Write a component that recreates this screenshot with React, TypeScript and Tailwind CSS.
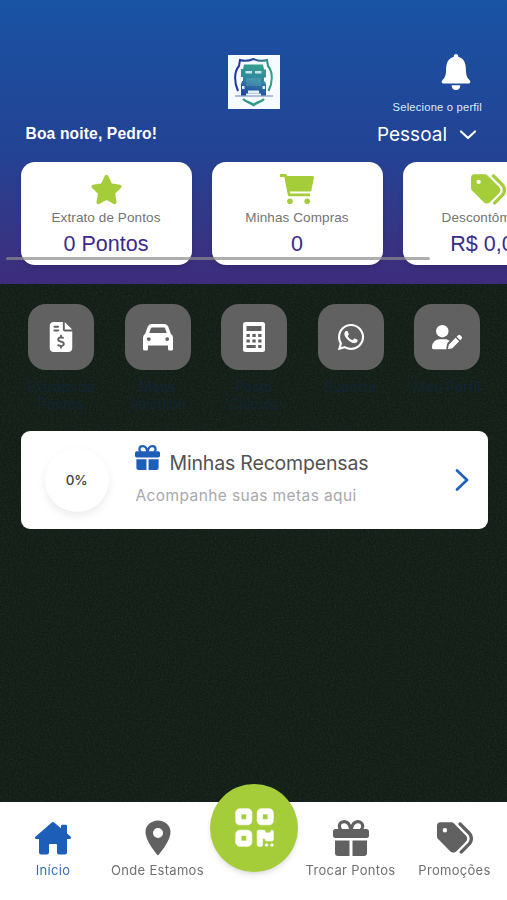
import type { ReactNode } from "react";
import { IoIosNotifications } from "react-icons/io";
import { IoLocationSharp } from "react-icons/io5";
import { FaFileInvoiceDollar, FaQrcode, FaStar, FaTags, FaWhatsapp } from "react-icons/fa6";

type IconProps = { className?: string };

function TruckLogo() {
    return (
        <svg viewBox="0 0 52 54" className="h-[54px] w-[52px]">
            <defs>
                <linearGradient id="truck" x1="0.6" y1="0" x2="0.4" y2="1">
                    <stop offset="0" stopColor="#35a08c" />
                    <stop offset="0.5" stopColor="#2f86a0" />
                    <stop offset="1" stopColor="#2443a8" />
                </linearGradient>
                <linearGradient id="shield" x1="0" y1="0" x2="1" y2="0">
                    <stop offset="0" stopColor="#2233a6" />
                    <stop offset="0.5" stopColor="#2b4e9a" />
                    <stop offset="1" stopColor="#34a284" />
                </linearGradient>
            </defs>
            <rect width="52" height="54" fill="#f5fbff" />
            <path d="M10 36C6 27 6 17 11 11l1-6c5 1.500 9 1 13.500-1C30 6 34 6.500 39 5l1 6c5 6 5 16 .5 25" fill="none" stroke="url(#shield)" strokeWidth="2" />
            <path d="M15 44c3 3 7 3 10.500 6 3.500-3 7.500-3 10.500-6" fill="none" stroke="#2e9a89" strokeWidth="2.400" />
            <path d="M7 41h38" stroke="#3b64ae" strokeWidth="0.800" />
            <path d="M16 9.500h19l1 5h2v8h-2v4h1l1 3v11h-5v-2H18v2h-5V29l1-3h1v-4h-2v-8h2z" fill="url(#truck)" />
            <path d="M17.500 16h6.500v2.500h-6.500zM27 16h6.500v2.500H27z" fill="#c3e5e8" />
            <path d="M18 24h15M18 26h15M18 28h15M18 30h15" stroke="#8ebfce" strokeWidth="0.500" />
            <path d="M14 31h2.500v3H14zM34.500 31H37v3h-2.500zM20 35.500h11v3H20z" fill="#e1f0f8" />
        </svg>
    );
}

function HomeIcon({ className }: IconProps) {
    return (
        <svg viewBox="0 0 36 33" className={className} fill="currentColor">
            <path d="M16.500.700a2.200 2.200 0 0 1 3 0L26 6.200V4a1.200 1.200 0 0 1 1.200-1.200h3.600A1.200 1.200 0 0 1 32 4v7.300l3.600 3.500c.9.900.3 2.200-.9 2.200H32v13.500a2 2 0 0 1-2 2h-6a2 2 0 0 1-2-2V23a1 1 0 0 0-1-1h-6a1 1 0 0 0-1 1v7.500a2 2 0 0 1-2 2H6a2 2 0 0 1-2-2V17H1.300C.1 17-.5 15.700.4 14.800z" />
        </svg>
    );
}

function CartIcon({ className }: IconProps) {
    return (
        <svg viewBox="0 0 34 30" className={className} fill="currentColor">
            <path d="M0 0h5.300c.8 0 1.500.5 1.700 1.300L7.200 2H32.500c.9 0 1.600.8 1.400 1.700l-2.500 12.500a1.800 1.800 0 0 1-1.800 1.400H9.800l.4 2H30v2.600H9.400c-.8 0-1.500-.5-1.600-1.300L4.400 3H0z" />
            <circle cx="10" cy="27.200" r="2.800" />
            <circle cx="27.200" cy="27.200" r="2.800" />
        </svg>
    );
}

function GiftIcon({ className }: IconProps) {
    return (
        <svg viewBox="0 0 36 36" className={className} fill="currentColor">
            <path d="M18 10.500C17 4.500 14.500 1.700 11.300 1.700 8.300 1.700 6.300 3.600 6.300 6.200c0 1.600.7 2.900 2 3.800M18 10.500C19 4.500 21.500 1.700 24.700 1.700c3 0 5 1.900 5 4.500 0 1.600-.7 2.900-2 3.800" fill="none" stroke="currentColor" strokeWidth="3.200" />
            <rect y="9" width="36" height="9" rx="2.500" />
            <path d="M2 20.500h14.500V36H5a3 3 0 0 1-3-3zM19.500 20.500H34V33a3 3 0 0 1-3 3H19.500z" />
        </svg>
    );
}

function CarIcon({ className }: IconProps) {
    return (
        <svg viewBox="0 0 30 27" className={className} fill="currentColor" fillRule="evenodd">
            <path d="M8.500 0h13a4 4 0 0 1 3.700 2.500l2.600 7.300A5 5 0 0 1 30 14v11a1.500 1.500 0 0 1-1.500 1.500h-2A1.500 1.500 0 0 1 25 25v-3.500H5V25a1.500 1.500 0 0 1-1.500 1.500h-2A1.500 1.500 0 0 1 0 25V14a5 5 0 0 1 2.200-4.200l2.600-7.300A4 4 0 0 1 8.500 0zm.3 3.500a1 1 0 0 0-.9.700L6.300 9h17.400l-1.600-4.800a1 1 0 0 0-.9-.7zM5.800 13.200a1.900 1.900 0 1 0 0 3.800 1.900 1.900 0 0 0 0-3.800zm18.400 0a1.900 1.900 0 1 0 0 3.800 1.900 1.900 0 0 0 0-3.800z" />
        </svg>
    );
}

function CalculatorIcon({ className }: IconProps) {
    return (
        <svg viewBox="0 0 22 30" className={className}>
            <rect width="22" height="30" rx="2.500" fill="currentColor" />
            <path d="M3.500 4h15v5h-15zM3.500 12h3.300v3H3.500zM9.400 12h3.300v3H9.400zM15.200 12h3.300v3h-3.300zM3.500 17.500h3.300v3H3.500zM9.400 17.500h3.300v3H9.400zM15.200 17.500h3.300v3h-3.300zM3.500 23h9.200v3H3.500zM15.200 23h3.300v3h-3.300z" fill="#616161" />
        </svg>
    );
}

function UserEditIcon({ className }: IconProps) {
    return (
        <svg viewBox="0 0 30 25" className={className} fill="currentColor">
            <circle cx="10.300" cy="6.200" r="6.200" />
            <path d="M7.500 14.200H13c1.700 0 3.300.6 4.600 1.500l-1.500 1.600c-.6.600-1 1.300-1.100 2.100l-.6 3.300c0 .6.100 1.100.3 1.500H1.400C.6 24.200 0 23.600 0 22.800v-1.100a7.500 7.500 0 0 1 7.500-7.500z" />
            <path d="m23.600 12.700 3.600 3.600-6.900 6.900-3.700.9c-.4.100-.7-.2-.6-.6l.8-3.800zM24.600 11.700l1.300-1.300a1.800 1.800 0 0 1 2.600 0l1 1a1.800 1.800 0 0 1 0 2.600l-1.300 1.300z" />
        </svg>
    );
}

function Header() {
    return (
        <header className="h-[284px] overflow-hidden bg-linear-to-b from-[#1853a4] via-[#234293] via-55% to-[#3d2c7c]">
            <div className="grid grid-cols-[1fr_52px_1fr] pt-[55px]">
                <div className="pt-[71px] pl-[25.500px] font-['Liberation_Sans',sans-serif] text-[15.600px] leading-4 font-bold tracking-[0.150px] whitespace-nowrap text-white">
                    Boa noite, Pedro!
                </div>
                <TruckLogo />
                <div className="flex flex-col items-end text-white">
                    <IoIosNotifications className="-mt-[6px] mr-[28px] size-[46px]" />
                    <span className="mt-[5px] mr-[25px] font-['Liberation_Sans',sans-serif] text-[11.200px] leading-[14px] tracking-[0.200px] text-blue-100">Selecione o perfil</span>
                    <div className="mt-[9px] mr-[30px] flex items-center gap-3">
                        <span className="font-['Inter',sans-serif] text-[19px] leading-6">Pessoal</span>
                        <svg viewBox="0 0 18 10" className="h-[10px] w-[18px]" fill="none" stroke="currentColor" strokeWidth="2.200" strokeLinecap="round" strokeLinejoin="round">
                            <path d="m2 1.500 7 6.500 7-6.500" />
                        </svg>
                    </div>
                </div>
            </div>
        </header>
    );
}

const summaries = [
    { label: "Extrato de Pontos", value: "0 Pontos", icon: <FaStar className="size-[33px]" /> },
    { label: "Minhas Compras", value: "0", icon: <CartIcon className="h-[30px] w-[34px]" /> },
    { label: "Descontômetro", value: "R$ 0,00", icon: <FaTags className="size-[35px]" /> },
];

function SummaryCards() {
    return (
        <div className="relative -mt-[122px] h-[122px] overflow-hidden font-['Liberation_Sans',sans-serif]">
            <div className="flex gap-5 pl-[20.500px]">
                {summaries.map((item) => (
                    <div key={item.label} className="flex h-[103px] w-[171px] shrink-0 flex-col items-center rounded-[14px] bg-white shadow-md">
                        <div className="mt-[7px] flex h-10 items-center text-[#a4cd39]">{item.icon}</div>
                        <span className="mt-px text-[13.500px] leading-4 tracking-[0.100px] text-neutral-500">{item.label}</span>
                        <span className="mt-[6px] text-[21.500px] leading-6 text-[#3b2a8c]">{item.value}</span>
                    </div>
                ))}
            </div>
            {/* scroll indicator */}
            <div className="absolute top-[94.500px] left-[6px] h-[3px] w-[424px] rounded-full bg-[#8b8b8b]/70" />
        </div>
    );
}

const shortcuts = [
    { label: "Extrato de Pontos", icon: <FaFileInvoiceDollar className="size-[30px]" /> },
    { label: "Meus Veículos", icon: <CarIcon className="h-[27px] w-[30px]" /> },
    { label: "Posto Cálculo", icon: <CalculatorIcon className="h-[30px] w-[22px]" /> },
    { label: "Suporte", icon: <FaWhatsapp className="size-[30px]" /> },
    { label: "Meu Perfil", icon: <UserEditIcon className="h-[25px] w-[30px]" /> },
];

function Shortcuts() {
    return (
        <div className="flex justify-between pr-5 pl-[21px] pt-5">
            {shortcuts.map((item) => (
                <div key={item.label} className="flex w-20 flex-col items-center">
                    <div className="flex size-[66px] items-center justify-center rounded-[18px] bg-[#616161] text-white">{item.icon}</div>
                    <span className="mt-2 text-center text-[14px] leading-[17px] text-[#122433]">{item.label}</span>
                </div>
            ))}
        </div>
    );
}

function RewardsCard() {
    return (
        <div className="mr-[19.500px] ml-[20.500px] mt-[19px] flex h-[98px] items-center rounded-[9px] bg-white">
            <div className="ml-[24px] flex size-16 items-center justify-center rounded-full bg-white text-[13.500px] font-medium tracking-[-0.300px] text-neutral-700 shadow-[0_4px_8px_rgba(0,0,0,0.080)]">
                0%
            </div>
            <div className="-mt-1 ml-[26px] flex-1">
                <div className="flex items-center gap-[10px]">
                    <GiftIcon className="-mt-[11px] size-[25px] text-[#1d5fb8]" />
                    <span className="text-[19.500px] leading-7 tracking-[-0.180px] whitespace-nowrap text-neutral-600">Minhas Recompensas</span>
                </div>
                <p className="mt-[7px] ml-[1px] text-[15.500px] leading-6 tracking-[0.400px] text-[#a9a9ac]">Acompanhe suas metas aqui</p>
            </div>
            <svg viewBox="0 0 14 22" className="mr-[18.500px] h-[22px] w-[14px]" fill="none" stroke="#1d5fb8" strokeWidth="2.600" strokeLinecap="round" strokeLinejoin="round">
                <path d="m2 1.500 10 9.500-10 9.500" />
            </svg>
        </div>
    );
}

function NavItem({ label, active, children }: { label: string; active?: boolean; children: ReactNode }) {
    return (
        <div className={`flex flex-col items-center ${active ? "text-[#1d5fb8]" : "text-[#616161]"}`}>
            <div className="flex h-10 items-center">{children}</div>
            <span className="mt-0.5 text-[13px] leading-5 tracking-[0.300px] whitespace-nowrap opacity-90">{label}</span>
        </div>
    );
}

function BottomNav() {
    return (
        <nav className="relative grid h-[98px] grid-cols-[106px_103px_90px_103px_105px] bg-white pt-4">
            <NavItem label="Início" active>
                <HomeIcon className="h-[33px] w-[36px]" />
            </NavItem>
            <NavItem label="Onde Estamos">
                <IoLocationSharp className="size-10" />
            </NavItem>
            <button type="button" className="-mt-[34px] ml-px flex size-[88px] items-center justify-center rounded-full bg-[#a4cd39] text-white shadow-md">
                <FaQrcode className="-mt-0.5 size-[43px] stroke-white stroke-[8]" />
            </button>
            <NavItem label="Trocar Pontos">
                <GiftIcon className="size-[36px]" />
            </NavItem>
            <NavItem label="Promoções">
                <FaTags className="size-[36px]" />
            </NavItem>
        </nav>
    );
}

// fine grain over the dark background
function Grain() {
    return (
        <svg className="pointer-events-none absolute inset-0 h-full w-full opacity-10">
            <filter id="grain">
                <feTurbulence type="fractalNoise" baseFrequency="0.6" numOctaves="2" seed="4" />
                <feColorMatrix values="0 0 0 0 0.150  0 0 0 0 0.330  0 0 0 0 0.200  1.800 0 0 0 -0.600" />
            </filter>
            <rect width="100%" height="100%" filter="url(#grain)" />
        </svg>
    );
}

export default function App() {
    return (
        <div className="flex h-[900px] w-[507px] flex-col overflow-hidden bg-[#131d17] font-['Inter',sans-serif]">
            <Header />
            <SummaryCards />
            <main className="relative flex-1">
                <Grain />
                <div className="relative">
                    <Shortcuts />
                    <RewardsCard />
                </div>
            </main>
            <BottomNav />
        </div>
    );
}
